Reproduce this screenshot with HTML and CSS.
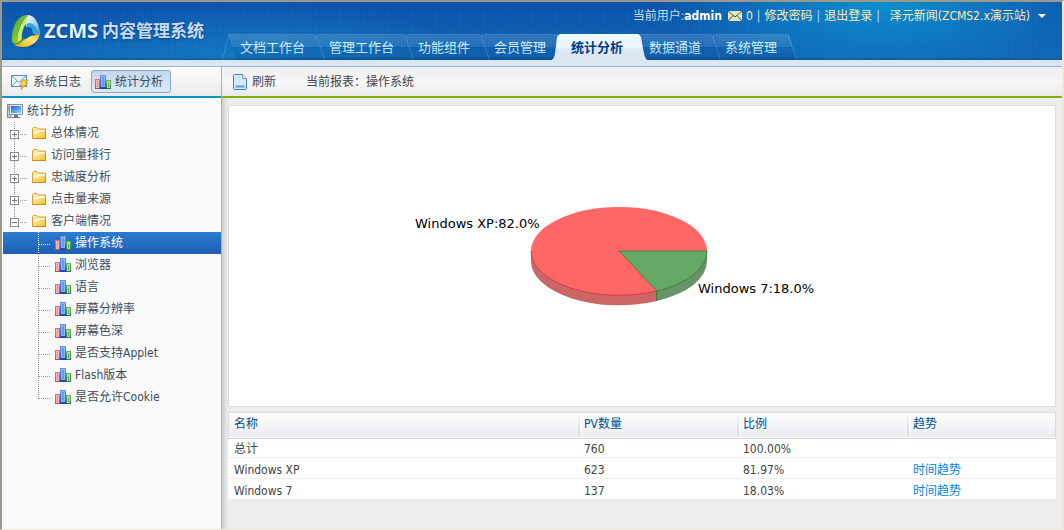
FILE: index.html
```html
<!DOCTYPE html>
<html lang="zh-CN">
<head>
    <meta charset="UTF-8">
    <meta name="viewport" content="width=device-width, initial-scale=1.0">
    <title>ZCMS 内容管理系统</title>
    <link rel="stylesheet" href="styles.css">
</head>
<body>
    <!-- shared icons -->
    <svg class="symbols" width="0" height="0" aria-hidden="true">
        <defs>
            <linearGradient id="g-red" x1="0" y1="0" x2="0" y2="1"><stop offset="0" stop-color="#ff6464"/><stop offset=".7" stop-color="#f45058"/><stop offset="1" stop-color="#b8485c"/></linearGradient>
            <linearGradient id="g-blue" x1="0" y1="0" x2="0" y2="1"><stop offset="0" stop-color="#6a9ae4"/><stop offset=".6" stop-color="#3468d8"/><stop offset="1" stop-color="#1a40c0"/></linearGradient>
            <linearGradient id="g-green" x1="0" y1="0" x2="0" y2="1"><stop offset="0" stop-color="#6cb46c"/><stop offset=".6" stop-color="#489a50"/><stop offset="1" stop-color="#2c6a5a"/></linearGradient>
            <linearGradient id="g-folder" x1="0" y1="0" x2="1" y2="1"><stop offset="0" stop-color="#fff6c0"/><stop offset="1" stop-color="#f5c02c"/></linearGradient>
            <linearGradient id="g-screen" x1="0" y1="0" x2="1" y2="1"><stop offset="0" stop-color="#1a5fd0"/><stop offset="1" stop-color="#8fd8ff"/></linearGradient>
        </defs>
        <symbol id="i-chart" viewBox="0 0 16 14">
            <rect x="0" y="4" width="6" height="10" fill="url(#g-red)"/>
            <rect x="1" y="5" width="3" height="8" fill="#ffb4ac"/>
            <rect x="2" y="6" width="1" height="6" fill="#fa8480"/>
            <rect x="5" y="0" width="6" height="14" fill="url(#g-blue)"/>
            <rect x="6" y="1" width="4" height="11" fill="#8cb8f6"/>
            <rect x="7" y="2" width="2" height="9" fill="#649cec"/>
            <rect x="11" y="5" width="5" height="9" fill="url(#g-green)"/>
            <rect x="12" y="6" width="3" height="7" fill="#a8dca0"/>
            <rect x="13" y="8" width="1" height="4" fill="#60ac64"/>
        </symbol>
        <symbol id="i-folder" viewBox="0 0 14 12">
            <path d="M.5 11.500V1.500L1.500.5H5L6.500 2H13.500V11.500Z" fill="url(#g-folder)" stroke="#dca040"/>
            <path d="M2 5.500H5.500L7 4H12.500" fill="none" stroke="#fff" stroke-width="1.500"/>
            <path d="M.5 11.500H13.500V5" fill="none" stroke="#cf8a1c"/>
        </symbol>
        <symbol id="i-plus" viewBox="0 0 24 22">
            <path d="M6.500 0V8M6.500 17V22M12 12.500H20" class="dots"/>
            <rect x="2.500" y="8.500" width="8" height="8" fill="#fdfdfd" stroke="#8c8c8c"/>
            <path d="M4 12.500H9M6.500 10V15" stroke="#777"/>
        </symbol>
        <symbol id="i-minus" viewBox="0 0 24 22">
            <path d="M6.500 0V8M12 12.500H20" class="dots"/>
            <rect x="2.500" y="8.500" width="8" height="8" fill="#fdfdfd" stroke="#8c8c8c"/>
            <path d="M4 12.500H9" stroke="#777"/>
        </symbol>
        <symbol id="i-branch" viewBox="0 0 16 22">
            <path d="M.5 0V22M1 12.500H13" class="dots"/>
        </symbol>
        <symbol id="i-last" viewBox="0 0 16 22">
            <path d="M.5 0V13M1 12.500H13" class="dots"/>
        </symbol>
    </svg>

    <div class="app">
        <header class="header">
            <div class="logo">
                <svg width="30" height="36" viewBox="0 0 30 36" aria-hidden="true">
                    <defs>
                        <linearGradient id="l-green" x1="0" y1="0" x2="1" y2="1"><stop offset="0" stop-color="#2e9a38"/><stop offset=".6" stop-color="#8fd02c"/><stop offset="1" stop-color="#2f8f2c"/></linearGradient>
                        <linearGradient id="l-blue" x1="0" y1="0" x2="1" y2="1"><stop offset="0" stop-color="#f4fcff"/><stop offset=".5" stop-color="#a8dcf4"/><stop offset="1" stop-color="#3c9cd8"/></linearGradient>
                        <linearGradient id="l-gold" x1="0" y1="1" x2="1" y2="0"><stop offset="0" stop-color="#f0a010"/><stop offset=".6" stop-color="#ffe870"/><stop offset="1" stop-color="#f0b020"/></linearGradient>
                    </defs>
                    <ellipse cx="15" cy="33" rx="10" ry="2" fill="#0a3c80" opacity=".4"/>
                    <path d="M17 2C6 1 0 16 1 28C2 32 5 31 7 30C5 20 9 9 17 2Z" fill="url(#l-green)"/>
                    <path d="M17 2C10 9 5 20 7 30L11 26C10 20 13 11 18 8Z" fill="#c8ec70"/>
                    <path d="M17 2C24 2 28 11 29 20C27 23 24 22 22 20C22 14 19 12 15 14C14 10 17 7 17 2Z" fill="url(#l-blue)"/>
                    <path d="M16 11C20 8 25 13 28 20C26 23 24 21 22 20C22 15 19 13 15 14Z" fill="#3aa4d8"/>
                    <path d="M3 31C9 25 12 29 18 24C21 21 26 24 29 20C28 28 21 33 14 34C9 34 5 34 3 31Z" fill="url(#l-gold)"/>
                    <path d="M2 29C6 32 9 27 14 25C11 30 6 33 3 31Z" fill="#48a83c"/>
                </svg>
                <span class="logo-name">ZCMS</span>
                <span class="logo-title">内容管理系统</span>
            </div>
            <div class="header-main">
                <div class="userbar">
                    <span>当前用户:<b>admin</b></span>
                    <a href="#" class="mail">
                        <svg width="14" height="10" viewBox="0 0 14 10" aria-hidden="true">
                            <rect width="14" height="10" fill="#f0e4a8"/>
                            <path d="M0 0L7 6L14 0M0 10L5 4.500M14 10L9 4.500" fill="none" stroke="#1d5a9c"/>
                        </svg>
                        0
                    </a>
                    <i>|</i>
                    <a href="#">修改密码</a>
                    <i>|</i>
                    <a href="#">退出登录</a>
                    <i>|</i>
                    <a href="#" class="site">泽元新闻(ZCMS2.x演示站)
                        <svg width="8" height="4" viewBox="0 0 8 4" aria-hidden="true"><path d="M0 0H8L4 4Z" fill="#fff"/></svg>
                    </a>
                </div>
                <nav class="tabs">
                    <a href="#" class="tab">文档工作台</a>
                    <a href="#" class="tab">管理工作台</a>
                    <a href="#" class="tab">功能组件</a>
                    <a href="#" class="tab">会员管理</a>
                    <a href="#" class="tab active">
                        <svg class="tab-shape" viewBox="0 0 102 27" preserveAspectRatio="none" aria-hidden="true">
                            <defs>
                                <linearGradient id="t-bg" x1="0" y1="0" x2="0" y2="1"><stop offset="0" stop-color="#eef8fe"/><stop offset=".5" stop-color="#e8f3fc"/><stop offset=".55" stop-color="#dde8f5"/><stop offset="1" stop-color="#dbe6f3"/></linearGradient>
                            </defs>
                            <path d="M0 27C4 26 5 24 6 20L8 4Q9 0 12 0H89Q92 0 93 4L96 20C97 24 98 26 102 27Z" fill="url(#t-bg)"/>
                        </svg>
                        <span>统计分析</span>
                    </a>
                    <a href="#" class="tab">数据通道</a>
                    <a href="#" class="tab">系统管理</a>
                </nav>
            </div>
        </header>
        <div class="strip"></div>

        <div class="columns">
            <aside class="sidebar">
                <div class="toolbar side-toolbar">
                    <button type="button" class="tool">
                        <svg width="18" height="16" viewBox="0 0 18 16" aria-hidden="true">
                            <rect x=".5" y="1.500" width="15" height="11" fill="#eaf4ff" stroke="#5a8cc8"/>
                            <path d="M1 2L8 8.500L15 2M1 12L6 7M15 12L10 7" fill="none" stroke="#6c9cd4"/>
                            <path d="M12 6H17L14.500 9H17L10 15.500L11.500 11.500H8.500Z" fill="#ffd040" stroke="#d89020" stroke-width=".8"/>
                        </svg>
                        <span>系统日志</span>
                    </button>
                    <button type="button" class="tool pressed">
                        <svg width="16" height="14"><use href="#i-chart"/></svg>
                        <span>统计分析</span>
                    </button>
                </div>
                <ul class="tree">
                    <li>
                        <a href="#" class="row root">
                            <svg width="16" height="16" viewBox="0 0 16 16" aria-hidden="true">
                                <path d="M.5 1.500H4V14.500H.5Z" fill="#c4ccd4" stroke="#7c8894"/>
                                <path d="M1 4H3M1 6H3" stroke="#7c8894"/>
                                <rect x="2.500" y="1.500" width="13" height="10" fill="#e4ecf4" stroke="#8494a4"/>
                                <rect x="4" y="3" width="10" height="7" fill="url(#g-screen)"/>
                                <path d="M7 12H11V14H13V15H5V14H7Z" fill="#6c7884"/>
                            </svg>
                            <span>统计分析</span>
                        </a>
                    </li>
                    <li><a href="#" class="row"><svg class="knot"><use href="#i-plus"/></svg><svg class="folder"><use href="#i-folder"/></svg><span>总体情况</span></a></li>
                    <li><a href="#" class="row"><svg class="knot"><use href="#i-plus"/></svg><svg class="folder"><use href="#i-folder"/></svg><span>访问量排行</span></a></li>
                    <li><a href="#" class="row"><svg class="knot"><use href="#i-plus"/></svg><svg class="folder"><use href="#i-folder"/></svg><span>忠诚度分析</span></a></li>
                    <li><a href="#" class="row"><svg class="knot"><use href="#i-plus"/></svg><svg class="folder"><use href="#i-folder"/></svg><span>点击量来源</span></a></li>
                    <li>
                        <a href="#" class="row"><svg class="knot"><use href="#i-minus"/></svg><svg class="folder"><use href="#i-folder"/></svg><span>客户端情况</span></a>
                        <ul>
                            <li><a href="#" class="row selected"><svg class="branch"><use href="#i-branch"/></svg><svg class="leaf"><use href="#i-chart"/></svg><span>操作系统</span></a></li>
                            <li><a href="#" class="row"><svg class="branch"><use href="#i-branch"/></svg><svg class="leaf"><use href="#i-chart"/></svg><span>浏览器</span></a></li>
                            <li><a href="#" class="row"><svg class="branch"><use href="#i-branch"/></svg><svg class="leaf"><use href="#i-chart"/></svg><span>语言</span></a></li>
                            <li><a href="#" class="row"><svg class="branch"><use href="#i-branch"/></svg><svg class="leaf"><use href="#i-chart"/></svg><span>屏幕分辨率</span></a></li>
                            <li><a href="#" class="row"><svg class="branch"><use href="#i-branch"/></svg><svg class="leaf"><use href="#i-chart"/></svg><span>屏幕色深</span></a></li>
                            <li><a href="#" class="row"><svg class="branch"><use href="#i-branch"/></svg><svg class="leaf"><use href="#i-chart"/></svg><span>是否支持Applet</span></a></li>
                            <li><a href="#" class="row"><svg class="branch"><use href="#i-branch"/></svg><svg class="leaf"><use href="#i-chart"/></svg><span>Flash版本</span></a></li>
                            <li><a href="#" class="row"><svg class="branch"><use href="#i-last"/></svg><svg class="leaf"><use href="#i-chart"/></svg><span>是否允许Cookie</span></a></li>
                        </ul>
                    </li>
                </ul>
            </aside>

            <main class="content">
                <div class="toolbar main-toolbar">
                    <button type="button" class="tool refresh">
                        <svg width="14" height="16" viewBox="0 0 14 16" aria-hidden="true">
                            <path d="M1.500.5H9.500L13.500 4.500V14.500Q13.500 15.500 12.500 15.500H1.500Q.5 15.500.5 14.500V1.500Q.5.500 1.500.5Z" fill="#d4e8fc" stroke="#4a7cb8"/>
                            <path d="M9.500.5V4.500H13.500" fill="#fff" stroke="#6c9cd0"/>
                            <path d="M2.500 12.500H11.500" stroke="#48a4ec" stroke-width="2"/>
                        </svg>
                        <span>刷新</span>
                    </button>
                    <span class="report">当前报表：操作系统</span>
                </div>
                <div class="panels">
                    <div class="chart">
                        <svg viewBox="0 0 826 300" role="img" aria-label="操作系统">
                            <path d="M302 145V155A88 44 0 0 0 428 195V185Z" fill="#cc6666"/>
                            <path d="M428 185V195A88 44 0 0 0 478 155V145Z" fill="#669466"/>
                            <ellipse cx="390" cy="145" rx="88" ry="44" fill="#ff6666"/>
                            <path d="M390 145H478A88 44 0 0 1 428 185Z" fill="#66a866" stroke="#3c883c"/>
                            <path d="M302 145A88 44 0 0 0 428 185" fill="none" stroke="#d83c40"/>
                            <path d="M427.500 185V195" stroke="#3c7c3c"/>
                            <text x="186" y="122">Windows XP:82.0%</text>
                            <text x="469" y="187">Windows 7:18.0%</text>
                        </svg>
                    </div>
                    <table class="grid">
                        <colgroup>
                            <col class="col-name">
                            <col class="col-pv">
                            <col class="col-rate">
                            <col>
                        </colgroup>
                        <thead>
                            <tr><th>名称</th><th>PV数量</th><th>比例</th><th>趋势</th></tr>
                        </thead>
                        <tbody>
                            <tr class="total"><td>总计</td><td>760</td><td>100.00%</td><td></td></tr>
                            <tr><td>Windows XP</td><td>623</td><td>81.97%</td><td><a href="#">时间趋势</a></td></tr>
                            <tr><td>Windows 7</td><td>137</td><td>18.03%</td><td><a href="#">时间趋势</a></td></tr>
                        </tbody>
                    </table>
                </div>
            </main>
        </div>
    </div>
</body>
</html>
```

FILE: styles.css
```css
* {
    box-sizing: border-box;
}

body {
    margin: 0;
    font-family: "DejaVu Sans Condensed", "Noto Sans CJK SC", sans-serif;
    font-size: 12px;
    line-height: 20px;
    color: #444;
    background: #ededed;
}

a {
    color: inherit;
    text-decoration: none;
}

ul {
    list-style: none;
    margin: 0;
    padding: 0;
}

svg {
    display: block;
    flex: none;
}

.symbols {
    position: absolute;
}

.dots {
    fill: none;
    stroke: currentColor;
    stroke-dasharray: 1 1;
    shape-rendering: crispEdges;
}

.app {
    display: flex;
    flex-direction: column;
    min-height: 100vh;
    border: 2px solid #9c998a;
    border-right-color: #ece9d8;
    border-bottom: 1px solid #ece9d8;
}

/* header */
.header {
    display: flex;
    height: 58px;
    background:
        linear-gradient(to top, rgba(0, 50, 110, 0.4), rgba(0, 50, 110, 0) 3px),
        repeating-linear-gradient(to right, rgba(255, 255, 255, 0.03) 0 1px, rgba(0, 0, 0, 0) 1px 3px),
        repeating-linear-gradient(to bottom, rgba(0, 0, 0, 0.03) 0 1px, rgba(0, 0, 0, 0) 1px 3px),
        radial-gradient(ellipse 220px 70px at 83% 0, rgba(10, 160, 220, 0.8), rgba(10, 160, 220, 0)),
        radial-gradient(ellipse 200px 60px at 24% 100%, rgba(20, 140, 210, 0.5), rgba(20, 140, 210, 0)),
        linear-gradient(to bottom, #0a52ac, #1069b8);
}

.logo {
    display: flex;
    align-items: center;
    width: 226px;
    padding-left: 9px;
    white-space: nowrap;
    text-shadow: 0 1px 2px rgba(0, 30, 80, 0.5);
}

.logo-name {
    margin-left: 3px;
    font-family: "Noto Sans", sans-serif;
    font-size: 20px;
    font-weight: bold;
    color: #eaf3fb;
}

.logo-title {
    margin-left: 4px;
    font-size: 17px;
    font-weight: bold;
    color: #c6daf0;
}

.header-main {
    flex: 1;
    display: flex;
    flex-direction: column;
    justify-content: space-between;
}

.userbar {
    display: flex;
    justify-content: flex-end;
    padding: 4px 16px 0 0;
    color: #c8dcec;
    white-space: nowrap;
}

.userbar b {
    color: #fff;
}

.userbar a {
    color: #ffe9b0;
}

.userbar i {
    margin: 0 4px;
    font-style: normal;
}

.mail,
.site {
    display: flex;
    align-items: center;
    margin-left: 6px;
}

.mail {
    gap: 4px;
}

.site {
    gap: 8px;
}

.tabs {
    display: flex;
    height: 26px;
}

.tab {
    position: relative;
    padding: 0 12px;
    font-size: 13px;
    line-height: 28px;
    color: #d6f4ff;
    white-space: nowrap;
}

.tab::before {
    content: "";
    position: absolute;
    inset: 0;
    border-top: 1px solid rgba(150, 200, 235, 0.35);
    border-right: 1px solid rgba(150, 200, 235, 0.35);
    border-top-right-radius: 4px;
    background: linear-gradient(to bottom, rgba(255, 255, 255, 0.14), rgba(255, 255, 255, 0.08) 50%, rgba(0, 40, 90, 0.08) 50%, rgba(0, 40, 90, 0.16));
    transform: skewX(17deg);
    transform-origin: top;
}

.tab:first-child::after {
    content: "";
    position: absolute;
    top: 0;
    bottom: 0;
    left: -3px;
    width: 12px;
    border-left: 1px solid rgba(150, 200, 235, 0.35);
    border-top-left-radius: 4px;
    transform: skewX(-14deg);
}

.tab.active {
    z-index: 1;
    padding: 0 14px 0 13px;
    font-weight: bold;
    color: #003c82;
}

.tab.active::before {
    display: none;
}

.tab.active span {
    position: relative;
}

.tab-shape {
    position: absolute;
    top: 0;
    left: -9px;
    width: calc(100% + 22px);
    height: 27px;
}

.strip {
    height: 7px;
    background: #dbe6f3;
    border-bottom: 1px solid #98b6d0;
}

/* layout */
.columns {
    flex: 1;
    display: flex;
}

.sidebar {
    width: 220px;
    border-right: 1px solid #a9b2b8;
    background: #f9f9f9;
}

.content {
    flex: 1;
    min-width: 0;
    background: linear-gradient(to right, #ccd0d2, #ededed 6px);
}

.toolbar {
    display: flex;
    align-items: center;
    height: 31px;
    background: linear-gradient(to bottom, #f0f0f0, #f6f6f6 50%, #ebebeb);
}

.side-toolbar {
    gap: 5px;
    padding-left: 4px;
    border-bottom: 2px solid #0f96c0;
    background: linear-gradient(to bottom, #fcfcfc, #ebebeb);
}

.main-toolbar {
    padding-left: 6px;
    border-bottom: 2px solid #86ac0c;
}

.tool {
    display: flex;
    align-items: center;
    gap: 4px;
    height: 23px;
    padding: 0 4px;
    border: 1px solid transparent;
    border-radius: 3px;
    background: none;
    font: inherit;
    color: #3c4c5c;
    white-space: nowrap;
}

.tool.pressed {
    padding: 0 7px 0 3px;
    border-color: #86a8d4;
    background: linear-gradient(to bottom, #c4d6ee, #dce9f8);
}

.refresh {
    gap: 5px;
}

/* the TC face centres the full-width colon */
.report {
    margin-left: 25px;
    font-family: "DejaVu Sans Condensed", "Noto Sans CJK TC", sans-serif;
}

/* tree */
.tree {
    padding: 2px 0 0 1px;
    color: #3f4d5c;
}

.row {
    display: flex;
    align-items: center;
    height: 22px;
    padding-left: 5px;
    white-space: nowrap;
}

.row.root {
    padding-left: 4px;
}

.row span {
    padding-left: 4px;
}

.knot,
.branch {
    height: 22px;
    color: #999;
}

.knot {
    width: 24px;
}

.branch {
    width: 16px;
}

.folder {
    width: 14px;
    height: 12px;
    margin-right: 1px;
}

.leaf {
    width: 16px;
    height: 14px;
    margin-left: 1px;
}

.tree ul .row {
    padding-left: 35px;
}

.tree .selected {
    color: #fff;
    background: linear-gradient(to bottom, #2b7ccf, #1f5fb4);
}

.selected .branch {
    color: #fff;
}

/* chart and table */
.panels {
    padding: 7px 6px 0;
}

.chart {
    border: 1px solid #dcdfe1;
    background: #fff;
}

.chart svg {
    width: 100%;
}

.chart text {
    font-family: "DejaVu Sans", sans-serif;
    font-size: 13px;
    fill: #000;
}

.grid {
    width: 100%;
    margin-top: 5px;
    table-layout: fixed;
    border-collapse: separate;
    border-spacing: 0;
    background: #fff;
}

.col-name {
    width: 351px;
}

.col-pv {
    width: 159px;
}

.col-rate {
    width: 170px;
}

.grid th {
    position: relative;
    height: 27px;
    padding: 0 5px 4px;
    border-top: 1px solid #d8dde0;
    border-bottom: 1px solid #ccd6da;
    background: linear-gradient(to bottom, #fdfdfd, #e9ecef);
    box-shadow: inset 0 1px #fff, inset 0 -1px #fff;
    font-weight: normal;
    text-align: left;
    color: #00508c;
}

.grid th:first-child {
    border-left: 1px solid #d8dde0;
}

.grid th:last-child {
    border-right: 1px solid #d8dde0;
}

.grid th + th::before {
    content: "";
    position: absolute;
    top: 3px;
    bottom: 3px;
    left: -1px;
    width: 2px;
    border-right: 1px solid #fff;
    background: linear-gradient(to bottom, #f4f6f7, #ccd6dc);
}

.grid td {
    height: 21px;
    padding: 4px 5px 0;
    border-bottom: 1px solid #ededed;
    line-height: 16px;
}

.grid td:first-child {
    padding-left: 6px;
}

.grid .total td {
    height: 19px;
    padding-top: 2px;
}

.grid a {
    color: #0084dc;
}
```
